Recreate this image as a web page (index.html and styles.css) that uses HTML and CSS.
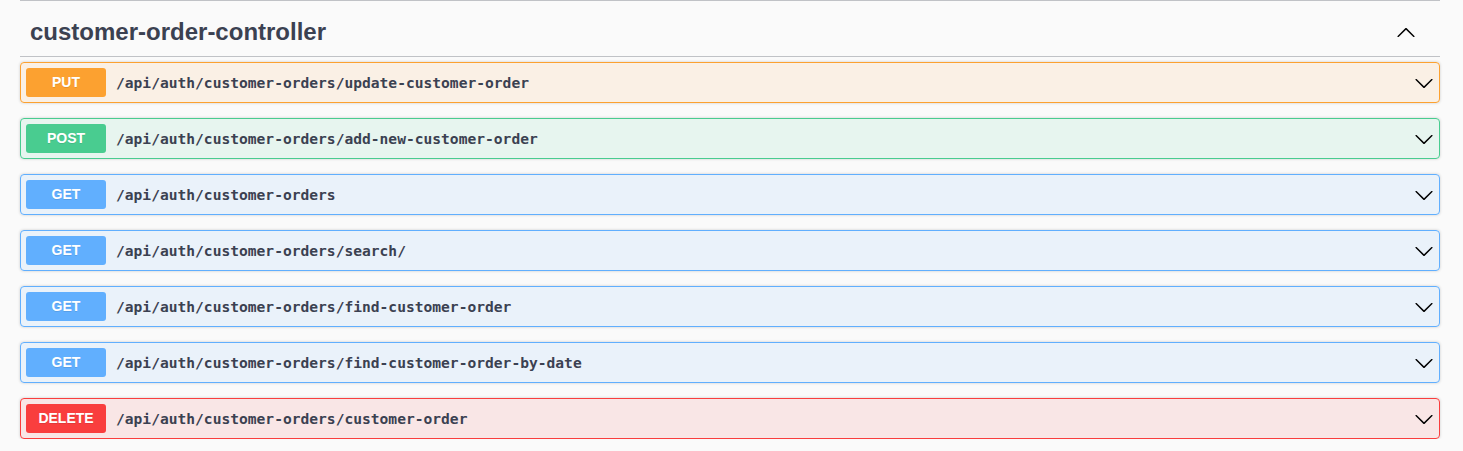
FILE: index.html
```html
<!DOCTYPE html>
<html>
<head>
<meta charset="utf-8">
<link rel="stylesheet" href="styles.css">
</head>
<body>
<section class="tag-section">
  <h3 class="tag-header">
    <span class="tag-name">customer-order-controller</span>
    <button class="expand-btn" aria-label="collapse">
      <svg width="20" height="20" viewBox="0 0 20 20"><path d="M17.418 14.908c.272.268.709.268.979 0s.271-.701 0-.969l-7.908-7.830c-.27-.268-.707-.268-.979 0l-7.908 7.830c-.27.268-.27.701 0 .969.271.268.709.268.979 0L10 7.767l7.418 7.141z"/></svg>
    </button>
  </h3>
  <div class="ops">
    <div class="op op-put">
      <span class="method">PUT</span>
      <span class="path">/api/auth/customer-orders/update-customer-order</span>
      <svg class="arrow" width="20" height="20" viewBox="0 0 20 20"><path d="M17.418 6.109c.272-.268.709-.268.979 0s.271.701 0 .969l-7.908 7.83c-.27.268-.707.268-.979 0l-7.908-7.83c-.27-.268-.27-.701 0-.969.271-.268.709-.268.979 0L10 13.25l7.418-7.141z"/></svg>
    </div>
    <div class="op op-post">
      <span class="method">POST</span>
      <span class="path">/api/auth/customer-orders/add-new-customer-order</span>
      <svg class="arrow" width="20" height="20" viewBox="0 0 20 20"><path d="M17.418 6.109c.272-.268.709-.268.979 0s.271.701 0 .969l-7.908 7.83c-.27.268-.707.268-.979 0l-7.908-7.83c-.27-.268-.27-.701 0-.969.271-.268.709-.268.979 0L10 13.25l7.418-7.141z"/></svg>
    </div>
    <div class="op op-get">
      <span class="method">GET</span>
      <span class="path">/api/auth/customer-orders</span>
      <svg class="arrow" width="20" height="20" viewBox="0 0 20 20"><path d="M17.418 6.109c.272-.268.709-.268.979 0s.271.701 0 .969l-7.908 7.83c-.27.268-.707.268-.979 0l-7.908-7.83c-.27-.268-.27-.701 0-.969.271-.268.709-.268.979 0L10 13.25l7.418-7.141z"/></svg>
    </div>
    <div class="op op-get">
      <span class="method">GET</span>
      <span class="path">/api/auth/customer-orders/search/</span>
      <svg class="arrow" width="20" height="20" viewBox="0 0 20 20"><path d="M17.418 6.109c.272-.268.709-.268.979 0s.271.701 0 .969l-7.908 7.83c-.27.268-.707.268-.979 0l-7.908-7.83c-.27-.268-.27-.701 0-.969.271-.268.709-.268.979 0L10 13.25l7.418-7.141z"/></svg>
    </div>
    <div class="op op-get">
      <span class="method">GET</span>
      <span class="path">/api/auth/customer-orders/find-customer-order</span>
      <svg class="arrow" width="20" height="20" viewBox="0 0 20 20"><path d="M17.418 6.109c.272-.268.709-.268.979 0s.271.701 0 .969l-7.908 7.83c-.27.268-.707.268-.979 0l-7.908-7.83c-.27-.268-.27-.701 0-.969.271-.268.709-.268.979 0L10 13.25l7.418-7.141z"/></svg>
    </div>
    <div class="op op-get">
      <span class="method">GET</span>
      <span class="path">/api/auth/customer-orders/find-customer-order-by-date</span>
      <svg class="arrow" width="20" height="20" viewBox="0 0 20 20"><path d="M17.418 6.109c.272-.268.709-.268.979 0s.271.701 0 .969l-7.908 7.83c-.27.268-.707.268-.979 0l-7.908-7.83c-.27-.268-.27-.701 0-.969.271-.268.709-.268.979 0L10 13.25l7.418-7.141z"/></svg>
    </div>
    <div class="op op-delete">
      <span class="method">DELETE</span>
      <span class="path">/api/auth/customer-orders/customer-order</span>
      <svg class="arrow" width="20" height="20" viewBox="0 0 20 20"><path d="M17.418 6.109c.272-.268.709-.268.979 0s.271.701 0 .969l-7.908 7.83c-.27.268-.707.268-.979 0l-7.908-7.83c-.27-.268-.27-.701 0-.969.271-.268.709-.268.979 0L10 13.25l7.418-7.141z"/></svg>
    </div>
  </div>
</section>
</body>
</html>
```
FILE: styles.css
```css
html, body {
  margin: 0;
  padding: 0;
  background: #fafafa;
}
body {
  padding: 0 23px 0 20px;
  font-family: "Liberation Sans", Arial, sans-serif;
  color: #3b4151;
}
.tag-section {
  border-top: 1px solid rgba(59, 65, 81, 0.3);
}
.tag-header {
  display: flex;
  align-items: center;
  justify-content: space-between;
  margin: 0 0 5px;
  padding: 14px 24px 7px 10px;
  border-bottom: 1px solid rgba(59, 65, 81, 0.3);
  font-size: 24px;
  line-height: 34px;
  font-weight: 700;
  color: #3b4151;
}
.expand-btn {
  display: flex;
  align-items: center;
  margin: 0;
  padding: 0;
  border: none;
  background: none;
}
.expand-btn svg, .arrow {
  fill: #000;
  display: block;
}
.ops {
  display: flex;
  flex-direction: column;
  gap: 15px;
}
.op {
  display: flex;
  align-items: center;
  padding: 5px;
  border: 1px solid;
  border-radius: 4px;
  box-shadow: 0 0 3px rgba(0, 0, 0, 0.19);
}
.method {
  flex: none;
  width: 80px;
  padding: 6px 0;
  border-radius: 3px;
  text-align: center;
  font-size: 14px;
  line-height: 17px;
  font-weight: 700;
  color: #fff;
  text-shadow: 0 1px 0 rgba(0, 0, 0, 0.1);
}
.path {
  flex: 1;
  padding: 0 10px;
  font-family: "DejaVu Sans Mono", "Liberation Mono", monospace;
  font-size: 14.6px;
  font-weight: 700;
  color: #3b4151;
}
.op-put { border-color: #fca130; background: rgba(252, 161, 48, 0.1); }
.op-put .method { background: #fca130; }
.op-post { border-color: #49cc90; background: rgba(73, 204, 144, 0.1); }
.op-post .method { background: #49cc90; }
.op-get { border-color: #61affe; background: rgba(97, 175, 254, 0.1); }
.op-get .method { background: #61affe; }
.op-delete { border-color: #f93e3e; background: rgba(249, 62, 62, 0.1); }
.op-delete .method { background: #f93e3e; }
```
